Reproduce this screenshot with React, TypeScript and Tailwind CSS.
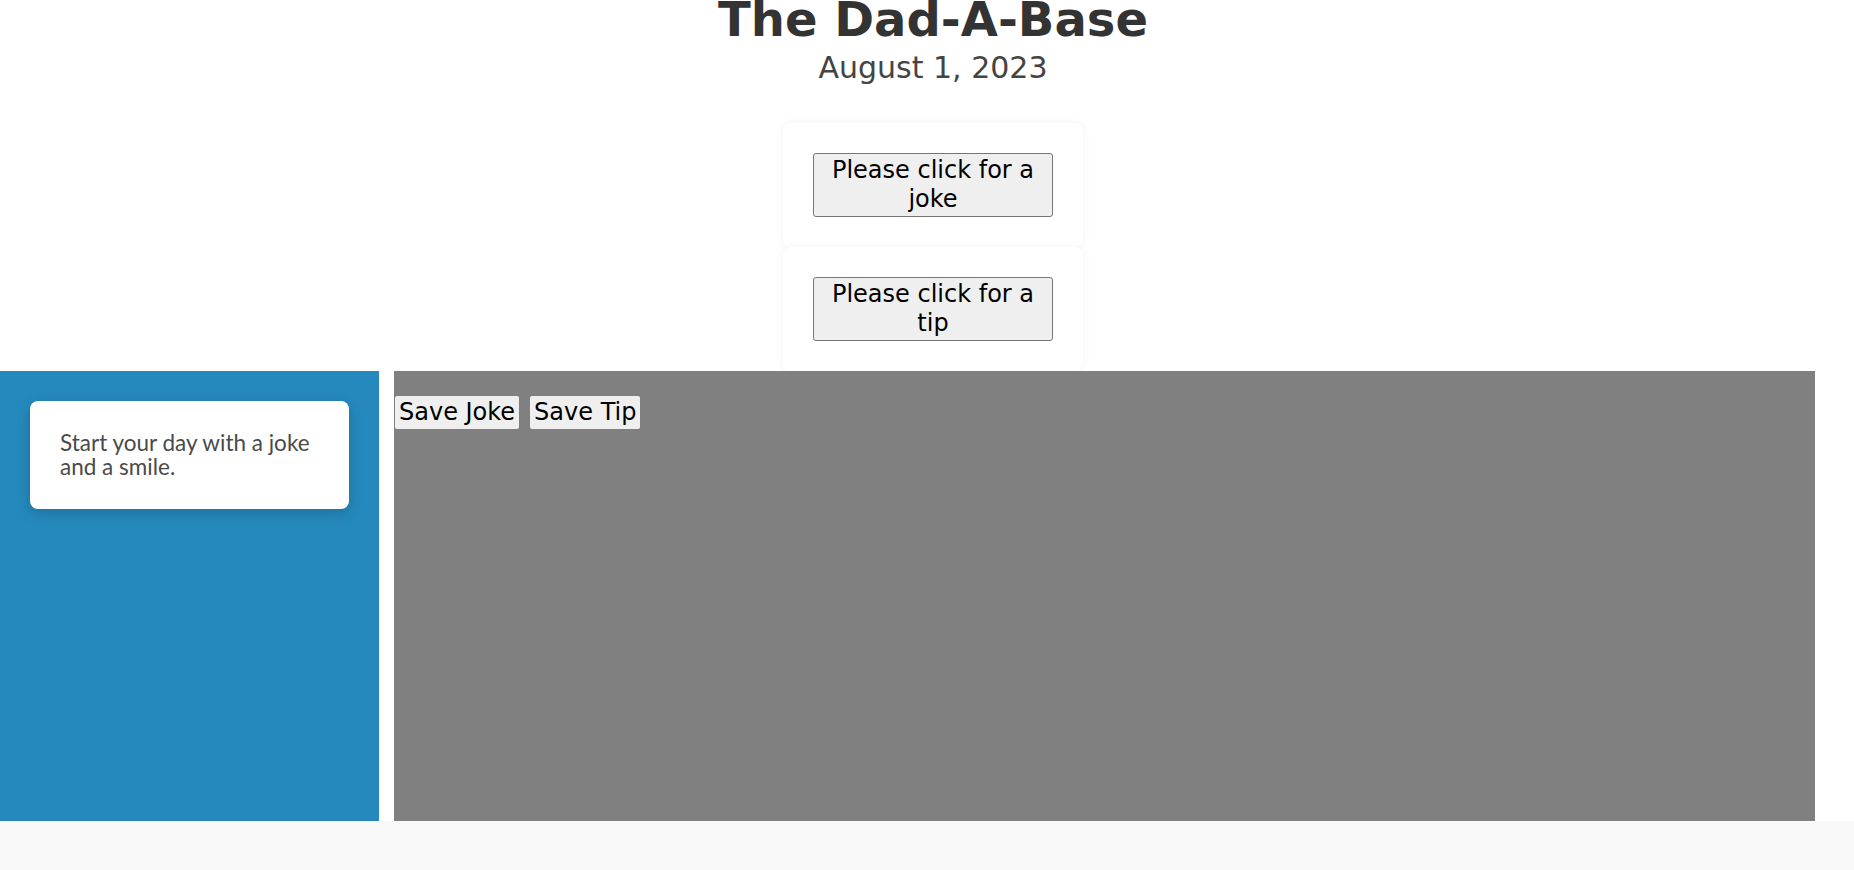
export default function App() {
  return (
    <div className="min-h-screen bg-[#f9f9f9]">
      <div className="bg-white">
        <div className="flex flex-col items-center pl-[12px] font-['DejaVu_Sans',sans-serif]">
          {/* header */}
          <header className="flex flex-col items-center">
            <h1 className="text-[48px] font-bold leading-[38px] text-[#333]">The Dad-A-Base</h1>
            <p className="mt-[12px] text-[30px] leading-[36px] text-[#444]">August 1, 2023</p>
          </header>

          {/* joke / tip cards */}
          <div className="mt-[37px] flex flex-col">
            <div className="w-[300px] rounded-[8px] bg-white p-[30px] shadow-[0_0_10px_rgba(0,0,0,0.05)]">
              <button className="w-[240px] rounded-[3px] border border-[#767676] bg-[#efefef] py-[2px] text-[24px] leading-[29px] text-black">
                Please click for a joke
              </button>
            </div>
            <div className="w-[300px] rounded-[8px] bg-white p-[30px] shadow-[0_0_10px_rgba(0,0,0,0.05)]">
              <button className="w-[240px] rounded-[3px] border border-[#767676] bg-[#efefef] py-[2px] text-[24px] leading-[29px] text-black">
                Please click for a tip
              </button>
            </div>
          </div>
        </div>

        {/* main area */}
        <div className="flex h-[450px]">
          <aside className="w-[379px] shrink-0 bg-[#2589bd] px-[30px] pt-[30px]">
            <div className="rounded-[8px] bg-white p-[30px] shadow-[0_4px_14px_rgba(0,0,0,0.18)]">
              <p className="font-['Lato',sans-serif] text-[22.5px] leading-[24px] text-[#4a4a4a]">
                Start your day with a joke and a smile.
              </p>
            </div>
          </aside>
          <main className="ml-[15px] w-[1421px] shrink-0 bg-[#808080] pl-[1px] pt-[25px]">
            <div className="flex gap-[11px] font-['DejaVu_Sans',sans-serif]">
              <button className="h-[33px] rounded-[2px] bg-[#efefef] px-[4px] text-[24px] leading-[29px] text-black">Save Joke</button>
              <button className="h-[33px] rounded-[2px] bg-[#efefef] px-[4px] text-[24px] leading-[29px] text-black">Save Tip</button>
            </div>
          </main>
        </div>
      </div>
    </div>
  );
}
